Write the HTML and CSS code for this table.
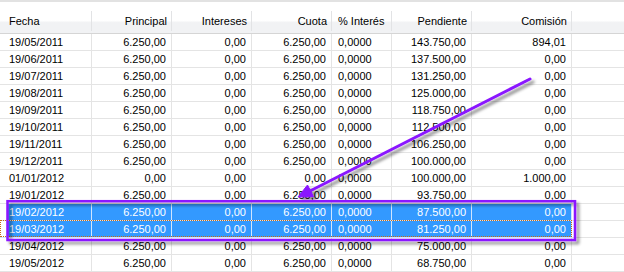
FILE: index.html
```html
<!DOCTYPE html>
<html lang="es">
<head>
    <meta charset="UTF-8">
    <title>Cuadro de amortización</title>
    <link rel="stylesheet" href="styles.css">
</head>
<body>
    <div class="topbar"></div>

    <div class="grid">
        <div class="row head">
            <div class="c">Fecha</div>
            <div class="c r">Principal</div>
            <div class="c r">Intereses</div>
            <div class="c r">Cuota</div>
            <div class="c">% Interés</div>
            <div class="c r">Pendiente</div>
            <div class="c r">Comisión</div>
            <div class="c fill"></div>
        </div>

        <div class="row">
            <div class="c">19/05/2011</div><div class="c r">6.250,00</div><div class="c r">0,00</div><div class="c r">6.250,00</div><div class="c">0,0000</div><div class="c r">143.750,00</div><div class="c r">894,01</div><div class="c fill"></div>
        </div>
        <div class="row">
            <div class="c">19/06/2011</div><div class="c r">6.250,00</div><div class="c r">0,00</div><div class="c r">6.250,00</div><div class="c">0,0000</div><div class="c r">137.500,00</div><div class="c r">0,00</div><div class="c fill"></div>
        </div>
        <div class="row">
            <div class="c">19/07/2011</div><div class="c r">6.250,00</div><div class="c r">0,00</div><div class="c r">6.250,00</div><div class="c">0,0000</div><div class="c r">131.250,00</div><div class="c r">0,00</div><div class="c fill"></div>
        </div>
        <div class="row">
            <div class="c">19/08/2011</div><div class="c r">6.250,00</div><div class="c r">0,00</div><div class="c r">6.250,00</div><div class="c">0,0000</div><div class="c r">125.000,00</div><div class="c r">0,00</div><div class="c fill"></div>
        </div>
        <div class="row">
            <div class="c">19/09/2011</div><div class="c r">6.250,00</div><div class="c r">0,00</div><div class="c r">6.250,00</div><div class="c">0,0000</div><div class="c r">118.750,00</div><div class="c r">0,00</div><div class="c fill"></div>
        </div>
        <div class="row">
            <div class="c">19/10/2011</div><div class="c r">6.250,00</div><div class="c r">0,00</div><div class="c r">6.250,00</div><div class="c">0,0000</div><div class="c r">112.500,00</div><div class="c r">0,00</div><div class="c fill"></div>
        </div>
        <div class="row">
            <div class="c">19/11/2011</div><div class="c r">6.250,00</div><div class="c r">0,00</div><div class="c r">6.250,00</div><div class="c">0,0000</div><div class="c r">106.250,00</div><div class="c r">0,00</div><div class="c fill"></div>
        </div>
        <div class="row">
            <div class="c">19/12/2011</div><div class="c r">6.250,00</div><div class="c r">0,00</div><div class="c r">6.250,00</div><div class="c">0,0000</div><div class="c r">100.000,00</div><div class="c r">0,00</div><div class="c fill"></div>
        </div>
        <div class="row">
            <div class="c">01/01/2012</div><div class="c r">0,00</div><div class="c r">0,00</div><div class="c r">0,00</div><div class="c">0,0000</div><div class="c r">100.000,00</div><div class="c r">1.000,00</div><div class="c fill"></div>
        </div>
        <div class="row">
            <div class="c">19/01/2012</div><div class="c r">6.250,00</div><div class="c r">0,00</div><div class="c r">6.250,00</div><div class="c">0,0000</div><div class="c r">93.750,00</div><div class="c r">0,00</div><div class="c fill"></div>
        </div>
        <div class="row sel">
            <div class="c">19/02/2012</div><div class="c r">6.250,00</div><div class="c r">0,00</div><div class="c r">6.250,00</div><div class="c">0,0000</div><div class="c r">87.500,00</div><div class="c r">0,00</div><div class="c fill"></div>
        </div>
        <div class="row sel current">
            <div class="c">19/03/2012</div><div class="c r">6.250,00</div><div class="c r">0,00</div><div class="c r">6.250,00</div><div class="c">0,0000</div><div class="c r">81.250,00</div><div class="c r">0,00</div><div class="c fill"></div>
        </div>
        <div class="row">
            <div class="c">19/04/2012</div><div class="c r">6.250,00</div><div class="c r">0,00</div><div class="c r">6.250,00</div><div class="c">0,0000</div><div class="c r">75.000,00</div><div class="c r">0,00</div><div class="c fill"></div>
        </div>
        <div class="row">
            <div class="c">19/05/2012</div><div class="c r">6.250,00</div><div class="c r">0,00</div><div class="c r">6.250,00</div><div class="c">0,0000</div><div class="c r">68.750,00</div><div class="c r">0,00</div><div class="c fill"></div>
        </div>
    </div>

    <!-- annotation drawn over the grid -->
    <svg class="marks" width="624" height="272" viewBox="0 0 624 272">
        <defs>
            <filter id="shadow" x="-10%" y="-10%" width="130%" height="140%">
                <feDropShadow dx="3" dy="3" stdDeviation="1.8" flood-color="#000" flood-opacity="0.45"/>
            </filter>
        </defs>
        <g filter="url(#shadow)" stroke="#8a14ff" fill="none">
            <rect x="7.5" y="201.2" width="567.5" height="38.8" stroke-width="2.5"/>
            <line x1="530" y1="79" x2="309" y2="191.5" stroke-width="3" stroke-linecap="round"/>
            <polygon points="298,197 313.5,196.5 307.5,185" fill="#8a14ff" stroke-width="1"/>
        </g>
    </svg>
</body>
</html>
```

FILE: styles.css
```css
:root {
    --grid-line: #e4e4e4;
    --select: #3399ff;
    --focus: #c86a10;
}

body {
    margin: 0;
    width: 624px;
    height: 272px;
    overflow: hidden;
    position: relative;
    background: #fff;
    color: #000;
    font-family: "Liberation Sans", Arial, sans-serif;
    font-size: 11px;
}

.topbar {
    height: 2px;
    background: #e2e2e2;
    margin-bottom: 8px;
}

.row {
    display: grid;
    grid-template-columns: 92px 80px 80px 80px 60px 80px 100px 1fr;
}

.c {
    box-sizing: border-box;
    height: 17px;
    line-height: 16px;
    padding: 0 5px 0 6px;
    border-right: 1px solid var(--grid-line);
    border-bottom: 1px solid var(--grid-line);
    white-space: nowrap;
    overflow: hidden;
}

.c:first-child {
    padding-left: 9px;
}

.r {
    text-align: right;
}

.fill {
    border-right: none;
}

/* column headers */
.head .c {
    height: 24px;
    line-height: 23px;
    background: linear-gradient(#ffffff 0%, #ffffff 45%, #f1f2f4 55%, #f1f2f4 100%);
    border-bottom: 1px solid #d5d5d5;
    border-right: none;
    position: relative;
}

.head .c::after {
    content: "";
    position: absolute;
    right: 0;
    top: 1px;
    bottom: 2px;
    width: 1px;
    background: #e2e3e5;
}

.head .fill::after {
    display: none;
}

/* selected rows */
.sel .c {
    background: var(--select);
    color: #fff;
    border-right-color: #cfe5ff;
    border-bottom-color: #cfe5ff;
}

.sel .c:first-child {
    background: linear-gradient(90deg, #fff 7px, var(--select) 7px);
}

.sel .fill {
    background: #fff;
    color: #000;
    border-bottom-color: var(--grid-line);
}

.current {
    position: relative;
}

.current::after {
    content: "";
    position: absolute;
    left: 0;
    top: -1px;
    width: 572px;
    height: 17px;
    box-sizing: border-box;
    border: 1px dotted var(--focus);
    pointer-events: none;
}

.marks {
    position: absolute;
    left: 0;
    top: 0;
}
```
